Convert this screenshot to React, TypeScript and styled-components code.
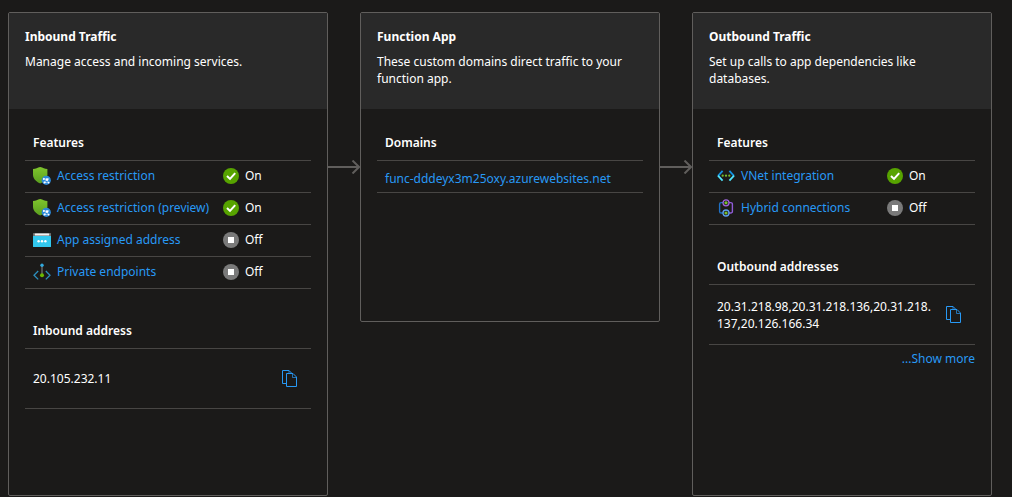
import React from "react";
import styled, { createGlobalStyle } from "styled-components";

const GlobalStyle = createGlobalStyle`
  *, *::before, *::after { box-sizing: border-box; }
  body {
    margin: 0;
    background: #1b1a19;
    color: #ffffff;
    font-family: "Noto Sans", "Open Sans", sans-serif;
    font-size: 12px;
    line-height: 17px;
  }
`;

const Page = styled.main`
  display: grid;
  grid-template-columns: minmax(0, 16fr) 32px minmax(0, 15fr) 32px minmax(0, 15fr);
  padding: 12px 20px 1px 8px;
`;

const Card = styled.section<{ $compact?: boolean }>`
  align-self: ${(p) => (p.$compact ? "start" : "stretch")};
  border: 1px solid #605e5c;
  border-radius: 2px;
  overflow: hidden;
`;

const CardHeader = styled.header`
  min-height: 96px;
  padding: 15px 16px;
  background: #292929;
`;

const CardTitle = styled.h2`
  margin: 0 0 8px;
  font-size: 12px;
  line-height: 17px;
  font-weight: 700;
`;

const Description = styled.p`
  margin: 0;
`;

const CardBody = styled.div<{ $space: number }>`
  display: flex;
  flex-direction: column;
  gap: 24px;
  padding: 16px 16px ${(p) => p.$space}px;
`;

const Group = styled.div``;

const GroupTitle = styled.h3`
  display: flex;
  align-items: center;
  height: 36px;
  margin: 0;
  padding: 0 8px;
  border-bottom: 1px solid #484644;
  font-size: 12px;
  line-height: 17px;
  font-weight: 600;
`;

const FeatureTable = styled.table`
  width: 100%;
  border-collapse: separate;
  border-spacing: 0;
  table-layout: fixed;
  text-align: left;

  caption {
    padding: 0;
    text-align: left;
  }
`;

const NameCell = styled.td`
  height: 32px;
  padding: 0 0 2px 8px;
  border-bottom: 1px solid #484644;
`;

const StatusCell = styled.td`
  width: 88px;
  height: 32px;
  padding: 0 0 2px;
  border-bottom: 1px solid #484644;
`;

const Inline = styled.span`
  display: flex;
  align-items: center;
  gap: 6px;
  height: 18px;
  white-space: nowrap;

  svg { flex: none; }
`;

const Link = styled.a`
  color: #2899f5;
  text-decoration: none;

  &:hover { text-decoration: underline; }
`;

const DomainRow = styled.div`
  display: flex;
  align-items: center;
  height: 32px;
  padding: 3px 8px 0;
  border-bottom: 1px solid #484644;
`;

const AddressRow = styled.div`
  display: flex;
  align-items: center;
  justify-content: space-between;
  gap: 8px;
  min-height: 60px;
  padding: 0 12px 0 8px;
  border-bottom: 1px solid #484644;
`;

const CopyButton = styled.button`
  display: flex;
  flex: none;
  padding: 0;
  border: 0;
  background: none;
  color: #2899f5;
  cursor: pointer;
`;

const More = styled.div`
  padding-top: 5px;
  text-align: right;
`;

const Connector = styled.div`
  padding-top: 148px;

  svg { display: block; }
`;

const ShieldIcon = () => (
  <svg width="18" height="18" viewBox="0 0 18 18" aria-hidden="true">
    <defs>
      <linearGradient id="shield" x1="0" y1="0" x2="0" y2="1">
        <stop offset="0" stopColor="#7fc52d" />
        <stop offset="1" stopColor="#5a9e1f" />
      </linearGradient>
    </defs>
    <path d="M0 2.1C3 1.9 4.3 .7 7.2 0C10.1 .7 11.4 1.9 14.4 2.1V8C14.4 12.5 9.5 15.5 7.2 16.5C4.9 15.5 0 12.5 0 8Z" fill="url(#shield)" />
    <circle cx="13.3" cy="13.3" r="4.6" fill="#2b88d8" />
    <path d="M10.5 11.3L13.8 12.5L16.2 11.4M13.8 12.5L11.4 15.4L15.5 15.8L13.8 12.5" fill="none" stroke="#9cc9ee" strokeWidth=".8" />
    <circle cx="10.9" cy="12" r="1" fill="#fff" />
    <circle cx="14" cy="12.6" r="1.4" fill="#fff" />
    <circle cx="11.6" cy="15.5" r="1.1" fill="#fff" />
    <circle cx="15.6" cy="15.6" r=".9" fill="#fff" />
  </svg>
);

const AddressIcon = () => (
  <svg width="18" height="18" viewBox="0 0 18 18" aria-hidden="true">
    <path d="M0 5H18V15.4A.6 .6 0 0 1 17.4 16H.6A.6 .6 0 0 1 0 15.4Z" fill="#32c8ee" />
    <path d="M.6 2H17.4A.6 .6 0 0 1 18 2.6V5H0V2.6A.6 .6 0 0 1 .6 2Z" fill="#6e6e6e" />
    <rect x="1.8" y="2.6" width="14.4" height="1.8" rx=".5" fill="#f2f2f2" />
    <circle cx="5.6" cy="10.2" r="1.2" fill="#fff" />
    <circle cx="9" cy="10.2" r="1.2" fill="#fff" />
    <circle cx="12.4" cy="10.2" r="1.2" fill="#fff" />
  </svg>
);

const EndpointIcon = () => (
  <svg width="18" height="18" viewBox="0 0 18 18" aria-hidden="true">
    <path d="M5.2 8L1 12.2L5.2 16.4" fill="none" stroke="#2d8fbd" strokeWidth="1.3" />
    <path d="M12.8 8L17 12.2L12.8 16.4" fill="none" stroke="#2d8fbd" strokeWidth="1.3" />
    <path d="M9 3V12" stroke="#8a8a8a" strokeWidth="1" />
    <circle cx="9" cy="2.2" r="1.7" fill="#32a9dc" />
    <circle cx="9" cy="12.2" r="2" fill="#6bb700" />
  </svg>
);

const VNetIcon = () => (
  <svg width="18" height="18" viewBox="0 0 18 18" aria-hidden="true">
    <path d="M5.6 3.8L1 8.8" fill="none" stroke="#1490df" strokeWidth="1.8" />
    <path d="M1 8.6L5.6 13.6" fill="none" stroke="#50e6ff" strokeWidth="1.8" />
    <path d="M12.4 3.8L17 8.8" fill="none" stroke="#1490df" strokeWidth="1.8" />
    <path d="M17 8.6L12.4 13.6" fill="none" stroke="#50e6ff" strokeWidth="1.8" />
    <circle cx="5.7" cy="8.7" r="1.15" fill="#76bc2d" />
    <circle cx="9" cy="8.7" r="1.15" fill="#76bc2d" />
    <circle cx="12.3" cy="8.7" r="1.15" fill="#76bc2d" />
  </svg>
);

const HybridIcon = () => (
  <svg width="18" height="18" viewBox="0 0 18 18" aria-hidden="true">
    <path d="M6 3.6H4.2A1.6 1.6 0 0 0 2.6 5.2V12.4A1.6 1.6 0 0 0 4.2 14H6" fill="none" stroke="#1f70c4" strokeWidth="1.4" />
    <path d="M12 3.6H13.8A1.6 1.6 0 0 1 15.4 5.2V12.4A1.6 1.6 0 0 1 13.8 14H12" fill="none" stroke="#8f5bd6" strokeWidth="1.4" />
    <circle cx="9" cy="3.8" r="3" fill="#1b1a19" stroke="#a067e0" strokeWidth="1.3" />
    <circle cx="9" cy="14" r="3" fill="#1b1a19" stroke="#5ea0ef" strokeWidth="1.3" />
    <circle cx="9" cy="3.8" r="1.6" fill="#76bc2d" />
    <circle cx="9" cy="14" r="1.6" fill="#76bc2d" />
  </svg>
);

const OnIcon = () => (
  <svg width="16" height="16" viewBox="0 0 16 16" aria-hidden="true">
    <circle cx="8" cy="8" r="8" fill="#57a300" />
    <path d="M4 8L7 10.9L12.2 5.1" fill="none" stroke="#fff" strokeWidth="2" />
  </svg>
);

const OffIcon = () => (
  <svg width="16" height="16" viewBox="0 0 16 16" aria-hidden="true">
    <circle cx="8" cy="8" r="8" fill="#7a7a7a" />
    <rect x="5" y="5" width="6" height="6" fill="#fff" />
  </svg>
);

const CopyIcon = () => (
  <svg width="17" height="18" viewBox="1 1 17 18" fill="none" stroke="currentColor" aria-hidden="true">
    <path d="M5 14.5H1.5V1.5H8L11 4.5" />
    <path d="M5.5 4.5H12L15.5 8V17.5H5.5Z" />
    <path d="M11.5 4.5V8.5H15.5M8 1.5V4" strokeOpacity=".7" />
  </svg>
);

const Arrow = () => (
  <Connector>
    <svg width="32" height="14" viewBox="0 0 32 14" fill="none" stroke="#605e5c" strokeWidth="2" aria-hidden="true">
      <path d="M0 7H31" />
      <path d="M24.5 .5L31 7L24.5 13.5" />
    </svg>
  </Connector>
);

interface Feature {
  name: string;
  icon: React.ReactNode;
  on: boolean;
}

const inboundFeatures: Feature[] = [
  { name: "Access restriction", icon: <ShieldIcon />, on: true },
  { name: "Access restriction (preview)", icon: <ShieldIcon />, on: true },
  { name: "App assigned address", icon: <AddressIcon />, on: false },
  { name: "Private endpoints", icon: <EndpointIcon />, on: false },
];

const outboundFeatures: Feature[] = [
  { name: "VNet integration", icon: <VNetIcon />, on: true },
  { name: "Hybrid connections", icon: <HybridIcon />, on: false },
];

const Features = ({ items }: { items: Feature[] }) => (
  <FeatureTable>
    <caption>
      <GroupTitle>Features</GroupTitle>
    </caption>
    <tbody>
      {items.map((f) => (
        <tr key={f.name}>
          <NameCell>
            <Inline>
              {f.icon}
              <Link href="#">{f.name}</Link>
            </Inline>
          </NameCell>
          <StatusCell>
            <Inline>
              {f.on ? <OnIcon /> : <OffIcon />}
              {f.on ? "On" : "Off"}
            </Inline>
          </StatusCell>
        </tr>
      ))}
    </tbody>
  </FeatureTable>
);

const Address = ({ title, value }: { title: string; value: string }) => (
  <>
    <GroupTitle>{title}</GroupTitle>
    <AddressRow>
      <span>
        {value.split(/(?<=[.,])/).map((part, i) => (
          <React.Fragment key={i}>
            {part}
            <wbr />
          </React.Fragment>
        ))}
      </span>
      <CopyButton type="button" aria-label="Copy to clipboard">
        <CopyIcon />
      </CopyButton>
    </AddressRow>
  </>
);

export default function App() {
  return (
    <>
      <GlobalStyle />
      <Page>
        <Card>
          <CardHeader>
            <CardTitle>Inbound Traffic</CardTitle>
            <Description>Manage access and incoming services.</Description>
          </CardHeader>
          <CardBody $space={86}>
            <Features items={inboundFeatures} />
            <Group>
              <Address title="Inbound address" value="20.105.232.11" />
            </Group>
          </CardBody>
        </Card>
        <Arrow />
        <Card $compact>
          <CardHeader>
            <CardTitle>Function App</CardTitle>
            <Description>These custom domains direct traffic to your function app.</Description>
          </CardHeader>
          <CardBody $space={128}>
            <Group>
              <GroupTitle>Domains</GroupTitle>
              <DomainRow>
                <Link href="#">func-dddeyx3m25oxy.azurewebsites.net</Link>
              </DomainRow>
            </Group>
          </CardBody>
        </Card>
        <Arrow />
        <Card>
          <CardHeader>
            <CardTitle>Outbound Traffic</CardTitle>
            <Description>Set up calls to app dependencies like databases.</Description>
          </CardHeader>
          <CardBody $space={86}>
            <Features items={outboundFeatures} />
            <Group>
              <Address
                title="Outbound addresses"
                value="20.31.218.98,20.31.218.136,20.31.218.137,20.126.166.34"
              />
              <More>
                <Link href="#">...Show more</Link>
              </More>
            </Group>
          </CardBody>
        </Card>
      </Page>
    </>
  );
}
